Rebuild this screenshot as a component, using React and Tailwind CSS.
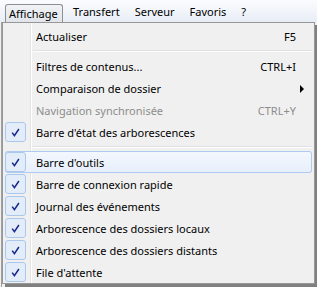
import React from 'react';

const menuBar = ['Transfert', 'Serveur', 'Favoris', '?'];

const groups = [
  [{ label: 'Actualiser', shortcut: 'F5' }],
  [
    { label: 'Filtres de contenus...', shortcut: 'CTRL+I' },
    { label: 'Comparaison de dossier', submenu: true },
    { label: 'Navigation synchronisée', shortcut: 'CTRL+Y', disabled: true },
    { label: "Barre d'état des arborescences", checked: true }
  ],
  [
    { label: "Barre d'outils", checked: true, active: true },
    { label: 'Barre de connexion rapide', checked: true },
    { label: 'Journal des événements', checked: true },
    { label: 'Arborescence des dossiers locaux', checked: true },
    { label: 'Arborescence des dossiers distants', checked: true },
    { label: "File d'attente", checked: true }
  ]
];

function CheckMark() {
  return <svg width="9" height="9" viewBox="0 0 9 9">
      <path d="M1.2 4.6 3.4 7.6 7.9 1" fill="none" stroke="#18298a" strokeWidth="1.5" />
    </svg>;
}

function MenuItem({ label, shortcut, checked, disabled, active, submenu }) {
  return <div className={`relative flex h-[22px] items-center rounded-[3px] ${active ? 'bg-gradient-to-b from-[#f4f8fe] to-[#e7effb] shadow-[inset_0_0_0_1px_#aecbef]' : ''}`}>
      <div className="flex h-[20px] w-[21px] shrink-0 items-center justify-center">
        {checked && <div className="flex h-[20px] w-[21px] items-center justify-center rounded-[3px] border border-[#aac8ee] bg-[#e3ecf9]">
            <CheckMark />
          </div>}
      </div>
      <span className={`ml-[10px] whitespace-nowrap ${disabled ? 'text-[#8d8d8d]' : 'text-black'}`}>{label}</span>
      {shortcut && <span className={`ml-auto pr-[16px] ${disabled ? 'text-[#8d8d8d]' : 'text-black'}`}>{shortcut}</span>}
      {submenu && <span className="absolute right-[8px] top-[8px] h-0 w-0 border-y-[4px] border-l-[4px] border-y-transparent border-l-black" />}
    </div>;
}

function Separator() {
  return <div className="flex h-[8px] items-center pl-[28px]">
      <div className="w-full border-t border-b border-t-[#e0e0e0] border-b-white" />
    </div>;
}

export default function App() {
  return <div className="relative h-[287px] w-[317px] overflow-hidden bg-[#f0f0f0] font-['Noto_Sans',sans-serif] text-[11px] leading-none">
      {/* barre de menus */}
      <div className="flex h-[22px] items-center bg-gradient-to-b from-[#fbfcfe] to-[#e8eef6] pl-[5px]">
        <div className="mt-[3px] flex h-[18px] w-[58px] items-center rounded-t-[3px] border border-b-0 border-[#8e8f8f] bg-gradient-to-b from-[#f1f3f5] to-[#e1e5ea] pl-[3px]">
          Affichage
        </div>
        <div className="ml-[10px] flex gap-[15px]">
          {menuBar.map(m => <span key={m}>{m}</span>)}
        </div>
      </div>

      {/* fenêtre derrière */}
      <div className="absolute left-[1px] top-[22px] bottom-0 w-px bg-[#a0a0a0]" />

      {/* menu déroulant */}
      <div className="absolute left-[2px] top-[22px] w-[313px] border border-[#979797] bg-[#f0f0f0] px-[2px] pt-[2px] shadow-[3px_3px_0_#808080]">
        <div className="absolute bottom-0 left-[27px] top-0 w-[2px] border-l border-r border-l-[#e2e3e3] border-r-white" />
        <div className="relative">
          {groups.map((g, gi) => <React.Fragment key={gi}>
              {gi > 0 && <Separator />}
              {g.map(it => <MenuItem key={it.label} {...it} />)}
            </React.Fragment>)}
        </div>
      </div>
    </div>;
}
